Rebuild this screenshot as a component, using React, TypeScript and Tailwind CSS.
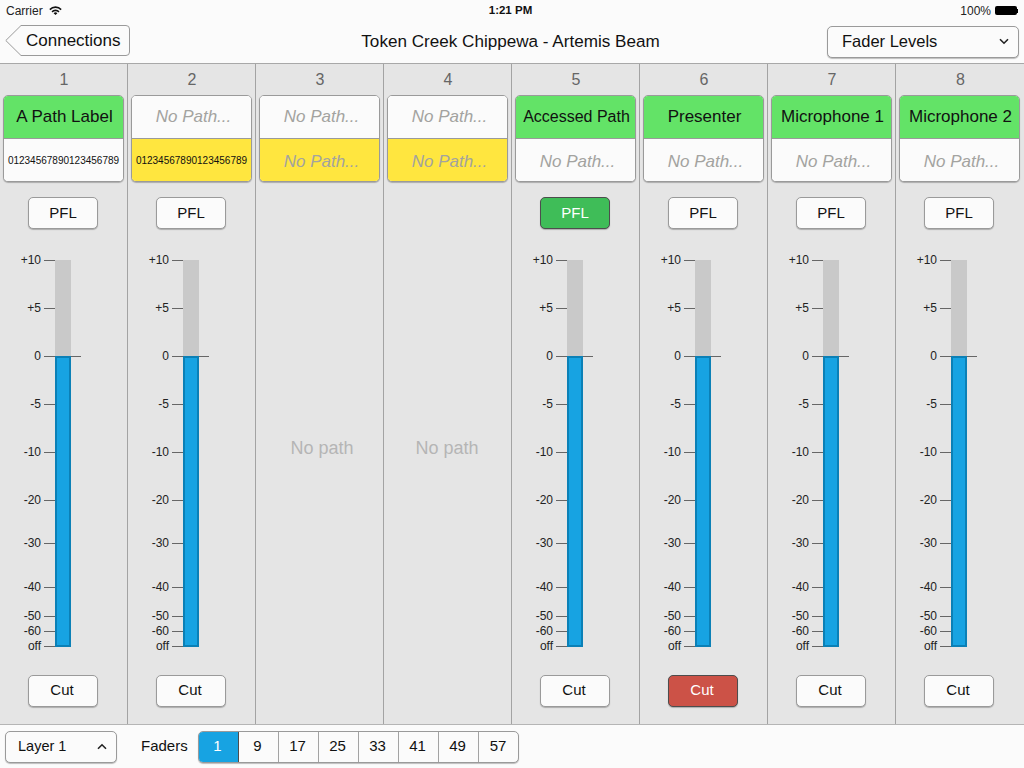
interface Channel {
  id: number
  top: string | null
  bottom: string | null
  topColor?: string
  topSize?: string
  bottomColor?: string
  hasFader: boolean
  pflOn?: boolean
  cutOn?: boolean
  emptyOffset?: string
}

const channels: Channel[] = [
  { id: 1, top: 'A Path Label', bottom: '01234567890123456789', topColor: 'bg-[#63e367]', hasFader: true },
  { id: 2, top: null, bottom: '01234567890123456789', bottomColor: 'bg-[#ffe63f]', hasFader: true },
  { id: 3, top: null, bottom: null, bottomColor: 'bg-[#ffe63f]', hasFader: false, emptyOffset: 'pl-[5px]' },
  { id: 4, top: null, bottom: null, bottomColor: 'bg-[#ffe63f]', hasFader: false, emptyOffset: 'pr-[1px]' },
  { id: 5, top: 'Accessed Path', bottom: null, topColor: 'bg-[#63e367]', topSize: 'text-[16px]', hasFader: true, pflOn: true },
  { id: 6, top: 'Presenter', bottom: null, topColor: 'bg-[#63e367]', hasFader: true, cutOn: true },
  { id: 7, top: 'Microphone 1', bottom: null, topColor: 'bg-[#63e367]', hasFader: true },
  { id: 8, top: 'Microphone 2', bottom: null, topColor: 'bg-[#63e367]', hasFader: true },
]

const ticks = [
  { label: '+10', top: 'top-0' },
  { label: '+5', top: 'top-[48px]' },
  { label: '0', top: 'top-[96px]' },
  { label: '-5', top: 'top-[144px]' },
  { label: '-10', top: 'top-[192px]' },
  { label: '-20', top: 'top-[240px]' },
  { label: '-30', top: 'top-[283px]' },
  { label: '-40', top: 'top-[327px]' },
  { label: '-50', top: 'top-[356px]' },
  { label: '-60', top: 'top-[371px]' },
  { label: 'off', top: 'top-[386px]' },
]

const faderPages = [1, 9, 17, 25, 33, 41, 49, 57]

const raised = 'rounded-[5px] border shadow-[0_1px_1px_rgba(0,0,0,0.25)]'
const raisedButton = `${raised} border-[#9a9a9a] bg-[#fbfbfb]`

function PathSlot({ text, color, size, small }: { text: string | null; color?: string; size?: string; small?: boolean }) {
  return (
    <div className={`flex-1 flex items-center justify-center whitespace-nowrap ${color ?? 'bg-[#fbfbfb]'}`}>
      {text === null ? (
        <span className={`text-[17px] italic text-[#a3a3a0] pl-[4px] ${small ? 'pt-[3px]' : ''}`}>No Path...</span>
      ) : small ? (
        <span className="text-[10px] text-[#111]">{text}</span>
      ) : (
        <span className={`pl-[2px] text-[#111] ${size ?? 'text-[17px]'}`}>{text}</span>
      )}
    </div>
  )
}

function Fader() {
  return (
    <div className="relative w-full h-[387px]">
      {ticks.map(tick => (
        <div key={tick.label} className={`absolute left-0 flex items-center h-px ${tick.top}`}>
          <span className="w-[41px] pb-[1px] text-right text-[12px] leading-none text-[#222]">{tick.label}</span>
          <span className={`ml-[3px] h-px bg-[#666] ${tick.label === '0' ? 'w-[37px]' : 'w-[11px]'}`} />
        </div>
      ))}
      <div className="absolute left-[55px] top-0 w-4 h-[96px] bg-[#c9c9c9]" />
      <div className="absolute left-[55px] top-[96px] w-4 h-[291px] bg-[#17a3e2] border-2 border-[#0b80b6]" />
    </div>
  )
}

function ChannelStrip({ channel }: { channel: Channel }) {
  return (
    <div className="w-32 flex flex-col items-stretch border-r border-[#a3a3a3] last:border-r-0">
      <div className="h-[31px] pt-[6px] pl-[1px] text-center text-[16px] leading-[19px] text-[#666]">{channel.id}</div>
      <div className={`mx-[3px] w-[121px] h-[87px] flex flex-col overflow-hidden divide-y divide-[#9a9a9a] ${raisedButton}`}>
        <PathSlot text={channel.top} color={channel.topColor} size={channel.topSize} />
        <PathSlot text={channel.bottom} color={channel.bottomColor} small />
      </div>
      {channel.hasFader ? (
        <>
          <div className="mt-[15px] pl-[28px]">
            <button
              className={`w-[70px] h-8 text-[15px] ${
                channel.pflOn ? `${raised} border-[#4d4d4d] bg-[#3fbd58] text-white` : `${raisedButton} text-[#111]`
              }`}
            >
              PFL
            </button>
          </div>
          <div className="mt-[31px]">
            <Fader />
          </div>
          <div className="mt-[28px] pl-[28px]">
            <button
              className={`w-[70px] h-8 pb-[2px] pr-[2px] text-[15px] ${
                channel.cutOn ? `${raised} border-[#4d4d4d] bg-[#cc5247] text-white` : `${raisedButton} text-[#111]`
              }`}
            >
              Cut
            </button>
          </div>
        </>
      ) : (
        <div className={`flex-1 flex items-center justify-center pb-[10px] text-[18px] text-[#b5b5b5] ${channel.emptyOffset ?? ''}`}>
          No path
        </div>
      )}
    </div>
  )
}

export default function App() {
  return (
    <div className="w-[1024px] h-[768px] flex flex-col overflow-hidden bg-[#fbfbfb] font-['Liberation_Sans',sans-serif] text-[#111]">
      <div className="h-5 pt-[1px] pl-[6px] pr-[6px] flex items-center justify-between text-[12px] text-[#222]">
        <div className="flex items-center gap-[6px]">
          <span>Carrier</span>
          <svg width="13" height="9" viewBox="0 0 13 9" className="mb-[1px]">
            <path d="M.3 3 1.4 4.2a7 7 0 0 1 10.2 0L12.7 3A8.6 8.6 0 0 0 .3 3Z" fill="#111" />
            <path d="M2.5 5.2 3.6 6.4a4 4 0 0 1 5.8 0l1.1-1.2a5.6 5.6 0 0 0-8 0Z" fill="#111" />
            <path d="M4.6 7.3 6.5 9l1.9-1.7a2.7 2.7 0 0 0-3.8 0Z" fill="#111" />
          </svg>
        </div>
        <span className="font-bold text-[11.5px] pr-[1px] text-[#111]">1:21 PM</span>
        <div className="flex items-center gap-1">
          <span>100%</span>
          <div className="flex items-center">
            <div className="w-[22px] h-[9px] rounded-[2px] bg-black" />
            <div className="w-[1px] h-[4px] bg-black" />
          </div>
        </div>
      </div>

      <header className="h-11 pl-[5px] pr-[5px] flex items-center justify-between border-b border-[#a8a8a8]">
        <div className="w-[125px] h-8 relative mb-[2px]">
          <svg width="125" height="32" viewBox="0 0 125 32" className="absolute inset-0">
            <path
              d="M16 .5H121a3.5 3.5 0 0 1 3.5 3.5V27a3.5 3.5 0 0 1-3.5 3.5H16L.8 15.5Z"
              fill="#fbfbfb"
              stroke="#9a9a9a"
            />
          </svg>
          <span className="absolute left-[21px] top-[6px] text-[17px] leading-[20px]">Connections</span>
        </div>
        <h1 className="pl-[64px] text-[17.1px] text-[#111]">Token Creek Chippewa - Artemis Beam</h1>
        <div className={`w-[192px] h-8 pl-[14px] pr-[9px] flex items-center justify-between text-[16.5px] ${raisedButton}`}>
          <span>Fader Levels</span>
          <svg width="10" height="7" viewBox="0 0 10 7" fill="none" stroke="#222" strokeWidth="1.6">
            <path d="M1 1.2 5 5.2 9 1.2" />
          </svg>
        </div>
      </header>

      <main className="flex-1 flex bg-[#e5e5e5]">
        {channels.map(channel => (
          <ChannelStrip key={channel.id} channel={channel} />
        ))}
      </main>

      <footer className="h-[44px] pl-[5px] flex items-center border-t border-[#b5b5b5]">
        <div className={`w-[112px] h-8 pl-[12px] pr-[9px] flex items-center justify-between text-[14.5px] ${raisedButton}`}>
          <span className="pt-[1px]">Layer 1</span>
          <svg width="10" height="7" viewBox="0 0 10 7" fill="none" stroke="#222" strokeWidth="1.6">
            <path d="M1 5.8 5 1.8 9 5.8" />
          </svg>
        </div>
        <span className="ml-[24px] w-[57px] text-[15px]">Faders</span>
        <div className={`flex w-[321px] h-8 overflow-hidden ${raisedButton}`}>
          {faderPages.map((page, i) => (
            <div
              key={page}
              className={`w-10 shrink-0 pr-[2px] flex items-center justify-center text-[15px] ${
                i === 0
                  ? 'bg-[#17a3e2] text-white border-r border-[#4d4d4d]'
                  : 'border-r border-[#a3a3a3] last:border-r-0'
              }`}
            >
              {page}
            </div>
          ))}
        </div>
      </footer>
    </div>
  )
}
